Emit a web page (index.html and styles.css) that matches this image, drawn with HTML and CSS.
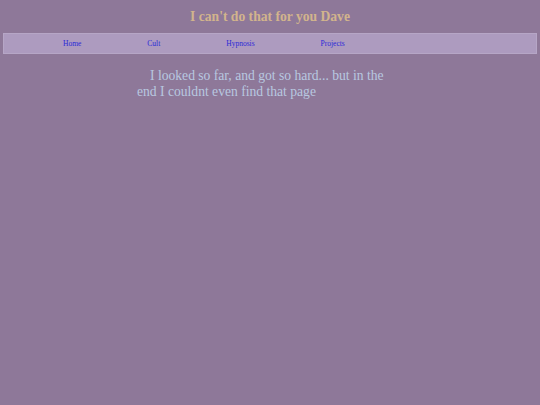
FILE: index.html
```html
<!DOCTYPE html>
<html>
<head>
<meta charset="utf-8">
<title>I can't do that for you Dave</title>
<link rel="stylesheet" href="styles.css">
</head>
<body>
<h1 class="title">I can't do that for you Dave</h1>
<nav class="navbar">
  <a href="#" class="nav-link">Home</a>
  <a href="#" class="nav-link">Cult</a>
  <a href="#" class="nav-link">Hypnosis</a>
  <a href="#" class="nav-link">Projects</a>
</nav>
<div class="content">
  <p class="message">I looked so far, and got so hard... but in the end I couldnt even find that page</p>
</div>
</body>
</html>
```
FILE: styles.css
```css
html, body {
  margin: 0;
  padding: 0;
}
body {
  background: #8e7899;
  font-family: "Liberation Serif", "Times New Roman", serif;
  width: 540px;
  height: 405px;
}
.title {
  margin: 0;
  padding-top: 9px;
  height: 24px;
  text-align: center;
  font-size: 13.6px;
  font-weight: bold;
  color: #d2b48c;
}
.navbar {
  margin: 0 3px;
  height: 19px;
  background: #ad9bbf;
  border: 1px solid #b6a6c6;
  display: flex;
  align-items: center;
  gap: 66px;
  padding-left: 59px;
}
.nav-link {
  color: #2a28d8;
  text-decoration: none;
  font-size: 7.5px;
}
.content {
  padding-left: 137px;
  width: 262px;
}
.message {
  margin: 14px 0 0;
  text-indent: 13px;
  font-size: 13.6px;
  line-height: 16px;
  color: #b8c8e0;
}
```
